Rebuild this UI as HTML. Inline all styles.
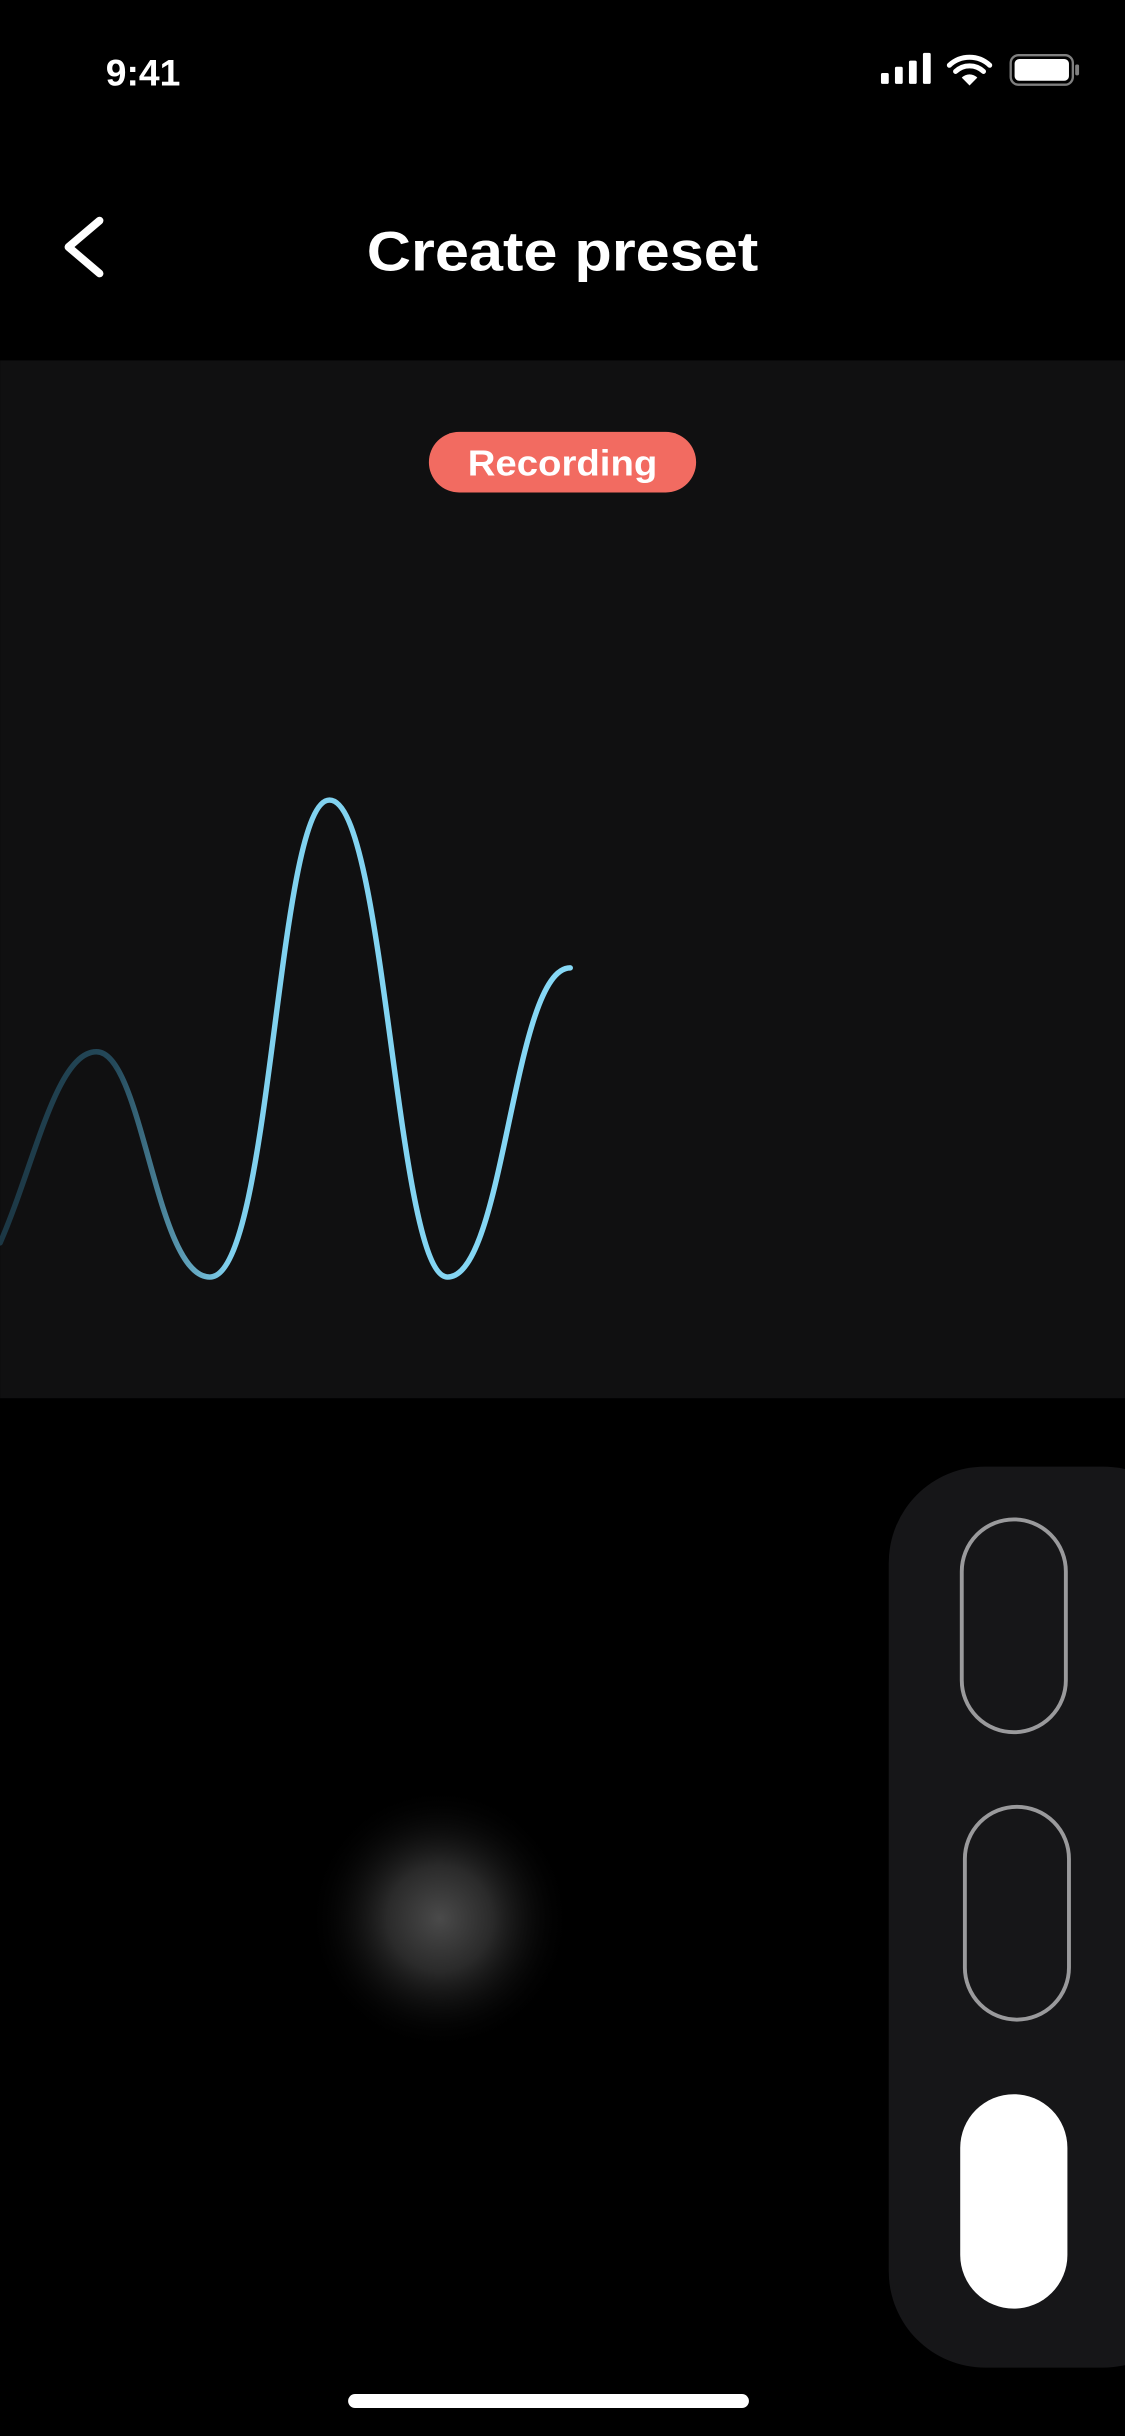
<!DOCTYPE html>
<html><head><meta charset="utf-8"><style>
html,body{margin:0;padding:0;background:#000;width:1125px;height:2436px;overflow:hidden}
svg{display:block}
</style></head><body>
<svg width="1125" height="2436" viewBox="0 0 724 1568" xmlns="http://www.w3.org/2000/svg">
<defs>
<linearGradient id="wg" x1="0" y1="0" x2="367" y2="0" gradientUnits="userSpaceOnUse">
<stop offset="0" stop-color="#1c3744"/>
<stop offset="0.2" stop-color="#24495a"/>
<stop offset="0.4" stop-color="#7fd0ee"/>
<stop offset="1" stop-color="#86d8f6"/>
</linearGradient>
<radialGradient id="glow" cx="0.5" cy="0.5" r="0.5">
<stop offset="0" stop-color="#4a4a4a"/>
<stop offset="0.4" stop-color="#2a2a2a"/>
<stop offset="1" stop-color="#000" stop-opacity="0"/>
</radialGradient>
</defs>
<rect width="724" height="1568" fill="#000"/>
<!-- status bar -->
<text x="92" y="55" fill="#fff" font-family="Liberation Sans, sans-serif" font-size="24" font-weight="600" text-anchor="middle">9:41</text>
<g fill="#fff">
<rect x="567" y="47" width="5" height="7" rx="1"/>
<rect x="576" y="43" width="5" height="11" rx="1"/>
<rect x="585" y="39" width="5" height="15" rx="1"/>
<rect x="594" y="34" width="5" height="20" rx="1"/>
</g>
<path d="M611 42 A19 19 0 0 1 637 42 M615 46 A13 13 0 0 1 633 46" stroke="#fff" stroke-width="3.2" fill="none" stroke-linecap="round"/>
<path d="M619 50 L624 55 L629 50 A7 7 0 0 0 619 50Z" fill="#fff"/>
<rect x="650.5" y="35.5" width="40" height="19" rx="5" fill="none" stroke="#fff" stroke-opacity="0.5" stroke-width="1.5"/>
<rect x="653" y="38" width="35" height="14" rx="3" fill="#fff"/>
<rect x="692" y="41.5" width="2.5" height="7" rx="1" fill="#fff" fill-opacity="0.5"/>
<!-- nav -->
<path d="M64 142 L44 159 L64 176" stroke="#fff" stroke-width="5" fill="none" stroke-linecap="round" stroke-linejoin="round"/>
<text x="362" y="174" fill="#fff" font-family="Liberation Sans, sans-serif" font-size="36" font-weight="700" text-anchor="middle" textLength="252" lengthAdjust="spacingAndGlyphs">Create preset</text>
<!-- panel -->
<rect x="0" y="232" width="724" height="668" fill="#101011"/>
<rect x="276" y="278" width="172" height="39" rx="19.5" fill="#f26b61"/>
<text x="362" y="306" fill="#fff" font-family="Liberation Sans, sans-serif" font-size="23" font-weight="700" text-anchor="middle" textLength="122" lengthAdjust="spacingAndGlyphs">Recording</text>
<path d="M0 800 C22 750 36 677 62 677 C92 677 100 822 135 822 C175 822 178 515 212 515 C248 515 255 822 288 822 C325 822 330 623 367 623" stroke="url(#wg)" stroke-width="3.5" fill="none" stroke-linecap="round"/>
<!-- glow -->
<circle cx="283" cy="1235" r="85" fill="url(#glow)"/>
<!-- right panel -->
<rect x="572" y="944" width="200" height="580" rx="62" fill="#161618"/>
<rect x="619" y="978" width="67" height="137" rx="33.5" fill="none" stroke="#9a9a9c" stroke-width="2.5"/>
<rect x="621" y="1163" width="67" height="137" rx="33.5" fill="none" stroke="#9a9a9c" stroke-width="2.5"/>
<rect x="618" y="1348" width="69" height="138" rx="34.5" fill="#fff"/>
<!-- home indicator -->
<rect x="224" y="1541" width="258" height="9" rx="4.5" fill="#fff"/>
</svg>
</body></html>
